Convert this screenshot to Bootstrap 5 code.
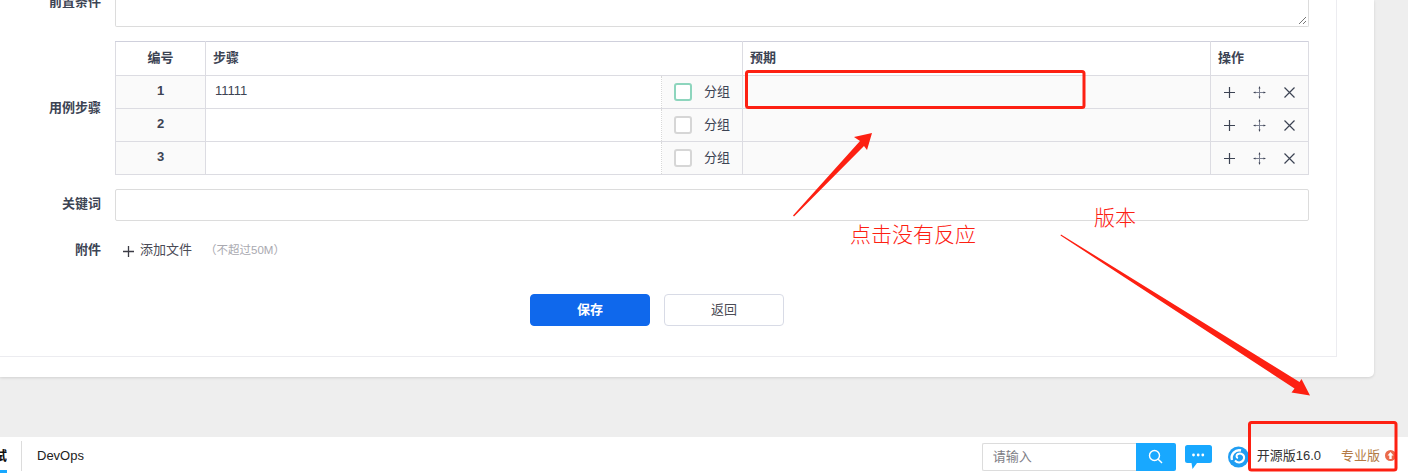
<!DOCTYPE html>
<html lang="zh-CN">
  <head>
    <meta charset="utf-8" />
    <meta name="viewport" content="width=device-width, initial-scale=1" />
    <title>用例步骤</title>
    <link href="https://cdn.jsdelivr.net/npm/bootstrap@5.3.2/dist/css/bootstrap.min.css" rel="stylesheet" />
    <style>
      html, body { height: 473px; overflow: hidden; }
      body {
        background: #eeeeee; color: #3c4353; font-size: 13px; line-height: 20px;
        font-family: "Liberation Sans", "Noto Sans CJK SC", sans-serif;
        position: relative; display: flex; flex-direction: column;
      }
      .page-area { flex: 1 1 auto; min-height: 0; padding-right: 34px; overflow: hidden; }
      .sheet { background: #fff; height: 377px; padding-right: 37px; border-radius: 0 0 5px 0; box-shadow: 0 1px 3px rgba(0,0,0,.12); }
      .inner-panel { height: 357px; border-right: 1px solid #ececf0; border-bottom: 1px solid #ececf0; padding-right: 27px; }
      .form-line { display: flex; align-items: center; }
      .form-name { width: 101px; margin-right: 14px; flex: none; text-align: right; font-weight: 700; color: #3c4353; }
      .form-body { flex: 1 1 auto; min-width: 0; }
      .text-cut { height: 27px; border: 1px solid #dcdcdc; border-top: 0; border-radius: 0 0 2px 2px; position: relative; }
      .text-cut .grip { position: absolute; right: 1px; bottom: 1px; }
      .line-top { height: 27px; }
      .line-top .form-name { margin-top: -23px; }
      .steps { margin: 14px 0 14px; }
      .steps table { width: 1194px; table-layout: fixed; border-collapse: collapse; margin: 0; }
      .steps th, .steps td { border: 1px solid #dcdce2; padding: 0; vertical-align: middle; color: #3c4353; }
      .steps thead th { height: 34px; border-top-color: #cfd0dc; font-weight: 700; padding: 0 0 2px 7px; }
      .steps thead th.num { text-align: center; padding-left: 0; }
      .steps tbody td { height: 33px; background: #fafafa; }
      .steps .num-cell { text-align: center; font-weight: 700; padding-bottom: 2px; }
      .steps tbody td.step-cell { background: #fff; padding: 0 0 2px 9px; border-right: 0; }
      .steps tbody td.group-cell { border-left: 1px dotted #d8d8d8; border-right: 1px solid #dcdce2; }
      .group-wrap { display: flex; align-items: center; padding-left: 12px; }
      .tick { width: 18px; height: 18px; border: 2px solid #d6d6d6; border-radius: 3px; background: #fff; margin-right: 12px; flex: none; }
      .tick-on { border-color: #8dd5bd; }
      .op-wrap { display: flex; align-items: center; padding-left: 13px; gap: 17px; }
      .op-wrap svg { display: block; flex: none; }
      .word-input { height: 32px; border: 1px solid #dcdcdc; border-radius: 2px; background: #fff; }
      .word-line .form-name { margin-top: -2px; }
      .attach-line { margin-top: 19px; height: 20px; }
      .attach-line .form-name { margin-top: -1px; }
      .add-file { color: #4a4a55; padding-left: 8px; display: flex; align-items: center; gap: 6px; }
      .add-file svg { margin-top: 2px; }
      .add-hint { color: #a9a9b0; font-size: 11.500px; margin-left: 13px; }
      .btn-line { margin-top: 34px; display: flex; gap: 14px; padding-left: 530px; }
      .btn-save, .btn-back { width: 120px; height: 32px; padding: 0; font-size: 13px; border-radius: 4px; }
      .btn-save, .btn-save:hover { background: #0f68ec; border: 1px solid #0f68ec; color: #fff; font-weight: 700; }
      .btn-back, .btn-back:hover { background: #fff; border: 1px solid #d8dbe6; color: #4b4b55; }
      .bottom-bar { flex: none; height: 36px; background: #fff; display: flex; align-items: center; padding-right: 12px; }
      .tab-cut { width: 7px; overflow: hidden; height: 36px; flex: none; position: relative; font-weight: 700; color: #111; font-size: 13px; line-height: 38px; direction: rtl; }
      .tab-cut::after { content: ""; position: absolute; left: 0; right: 0; bottom: 0; height: 3px; background: #18a8ff; }
      .tab-gap { width: 1px; height: 30px; background: #dcdcdc; margin: 2px 15px 0 14px; flex: none; }
      .tab-link { color: #222; font-size: 13px; margin-top: 2px; }
      .search-box { width: 194px; height: 28px; display: flex; margin-top: 3px; }
      .search-text { width: 154px; border: 1px solid #dcdcdc; border-right: 0; border-radius: 2px 0 0 2px; color: #7d7d85; padding-left: 10px; line-height: 26px; }
      .search-go { width: 40px; background: #18a8ff; display: flex; align-items: center; justify-content: center; border-radius: 0 2px 2px 0; }
      .chat-mark { margin-left: 9px; margin-top: 4px; display: block; }
      .logo-mark { margin-left: 16px; margin-top: 2px; display: block; }
      .ver-free { color: #333; margin-left: 8px; margin-top: 2px; }
      .ver-pro { color: #b37a45; margin-left: 20px; margin-top: 2px; }
      .pro-up { margin-left: 5px; margin-top: 1px; display: block; }
      .overlay { position: absolute; left: 0; top: 0; pointer-events: none; }
      .note { position: absolute; color: #fd2012; font-size: 21px; line-height: 24px; font-weight: 300; font-family: "Noto Sans CJK SC", sans-serif; white-space: nowrap; }
      .note-a { left: 850px; top: 221px; }
      .note-b { left: 1094px; top: 204px; }
    </style>
  </head>
  <body>
    <div class="page-area">
      <div class="sheet">
        <div class="inner-panel">
          <div class="form-line line-top">
            <div class="form-name">前置条件</div>
            <div class="form-body">
              <div class="text-cut">
                <svg class="grip" width="9" height="9" viewBox="0 0 9 9"><path d="M1 8 8 1M5 8 8 5" stroke="#777" fill="none" /></svg>
              </div>
            </div>
          </div>
          <div class="form-line steps">
            <div class="form-name">用例步骤</div>
            <div class="form-body">
              <table class="table">
                <colgroup>
                  <col style="width:90px" /><col style="width:456px" /><col style="width:81px" /><col style="width:468px" /><col style="width:98px" />
                </colgroup>
                <thead>
                  <tr>
                    <th class="num">编号</th>
                    <th colspan="2">步骤</th>
                    <th>预期</th>
                    <th>操作</th>
                  </tr>
                </thead>
                <tbody id="step-rows"></tbody>
              </table>
            </div>
          </div>
          <div class="form-line word-line">
            <div class="form-name">关键词</div>
            <div class="form-body"><div class="word-input"></div></div>
          </div>
          <div class="form-line attach-line">
            <div class="form-name">附件</div>
            <div class="form-body d-flex align-items-center">
              <div class="add-file">
                <svg width="11" height="11" viewBox="0 0 11 11"><path d="M5.500 0v11M0 5.500h11" stroke="#3c3c46" stroke-width="1.300" fill="none" /></svg>
                添加文件
              </div>
              <span class="add-hint">（不超过50M）</span>
            </div>
          </div>
          <div class="btn-line">
            <button type="button" class="btn btn-save">保存</button>
            <button type="button" class="btn btn-back">返回</button>
          </div>
        </div>
      </div>
    </div>

    <div class="bottom-bar">
      <div class="tab-cut">试</div>
      <div class="tab-gap"></div>
      <div class="tab-link">DevOps</div>
      <div class="ms-auto d-flex align-items-center">
        <div class="search-box">
          <div class="search-text">请输入</div>
          <div class="search-go">
            <svg width="15" height="15" viewBox="0 0 15 15"><circle cx="6.500" cy="6.500" r="5" stroke="#fff" stroke-width="1.400" fill="none" /><path d="M10.200 10.200 14 14" stroke="#fff" stroke-width="1.400" /></svg>
          </div>
        </div>
        <svg class="chat-mark" width="27" height="25" viewBox="0 0 27 25"><path d="M2.500 0h22A2.500 2.500 0 0 1 27 2.500v13a2.500 2.500 0 0 1-2.500 2.500H12l-4.500 6-1-6h-4A2.500 2.500 0 0 1 0 15.500v-13A2.500 2.500 0 0 1 2.500 0z" fill="#18a8ff" /><circle cx="8.500" cy="10" r="1.400" fill="#fff" /><circle cx="13.200" cy="10" r="1.400" fill="#fff" /><circle cx="17.800" cy="10" r="1.400" fill="#fff" /></svg>
        <svg class="logo-mark" width="21" height="23" viewBox="0 0 21 23"><circle cx="10.500" cy="12" r="10.500" fill="#1f9df2" /><path d="M4 15a7.500 7.500 0 0 1 9-9.500" stroke="#fff" stroke-width="2.400" fill="none" /><path d="M7 15.500c3 3.500 8 2 9-2 .8-3.500-3-6-6-4.500-2 1-2 3.500 0 4" stroke="#fff" stroke-width="2" fill="none" /></svg>
        <span class="ver-free">开源版16.0</span>
        <span class="ver-pro">专业版</span>
        <svg class="pro-up" width="11" height="11" viewBox="0 0 11 11"><circle cx="5.500" cy="5.500" r="5.500" fill="#ea6a4b" /><path d="M5.500 2 8.500 5.500H6.700V9H4.300V5.500H2.500z" fill="#fff" /></svg>
      </div>
    </div>

    <svg class="overlay" width="1408" height="473" viewBox="0 0 1408 473">
      <rect x="746.500" y="71.500" width="337.500" height="36" rx="2" fill="none" stroke="#fd2012" stroke-width="3" />
      <rect x="1249.500" y="422.500" width="146.500" height="47.500" rx="2" fill="none" stroke="#fd2012" stroke-width="3" />
      <path d="M793 215.500 860 141 854 137 872 133 867 150 864 146 794 216.500z" fill="#fd2012" />
      <path d="M1061 234.500 1299.500 382 1301.500 379 1310 395.500 1291.500 392.500 1294.500 388.500 1060.500 235.500z" fill="#fd2012" />
    </svg>
    <div class="note note-a">点击没有反应</div>
    <div class="note note-b">版本</div>

    <script>
      const steps = ["11111", "", ""];
      const opIcons = `
        <svg width="11" height="11" viewBox="0 0 11 11"><path d="M5.500 0v11M0 5.500h11" stroke="#3c4353" stroke-width="1.200" fill="none" /></svg>
        <svg width="13" height="13" viewBox="0 0 13 13" style="margin-left:1px"><path d="M6.500 2v9M2 6.500h9" stroke="#7c8192" stroke-width="1" fill="none" /><path d="M6.500 0 7.500 2.500h-2zM6.500 13l-1-2.500h2zM0 6.500l2.500-1v2zM13 6.500l-2.500 1v-2z" fill="#3c4353" /></svg>
        <svg width="11" height="11" viewBox="0 0 11 11" style="margin-left:1px"><path d="M.5.500l10 10M10.500.500l-10 10" stroke="#3c4353" stroke-width="1.200" fill="none" /></svg>`;
      document.getElementById("step-rows").innerHTML = steps.map((text, i) => `
        <tr>
          <td class="num-cell">${i + 1}</td>
          <td class="step-cell">${text}</td>
          <td class="group-cell">
            <div class="group-wrap"><span class="tick ${i === 0 ? "tick-on" : ""}"></span>分组</div>
          </td>
          <td></td>
          <td><div class="op-wrap">${opIcons}</div></td>
        </tr>`).join("");
    </script>
    <script src="https://cdn.jsdelivr.net/npm/bootstrap@5.3.2/dist/js/bootstrap.bundle.min.js"></script>
  </body>
</html>
